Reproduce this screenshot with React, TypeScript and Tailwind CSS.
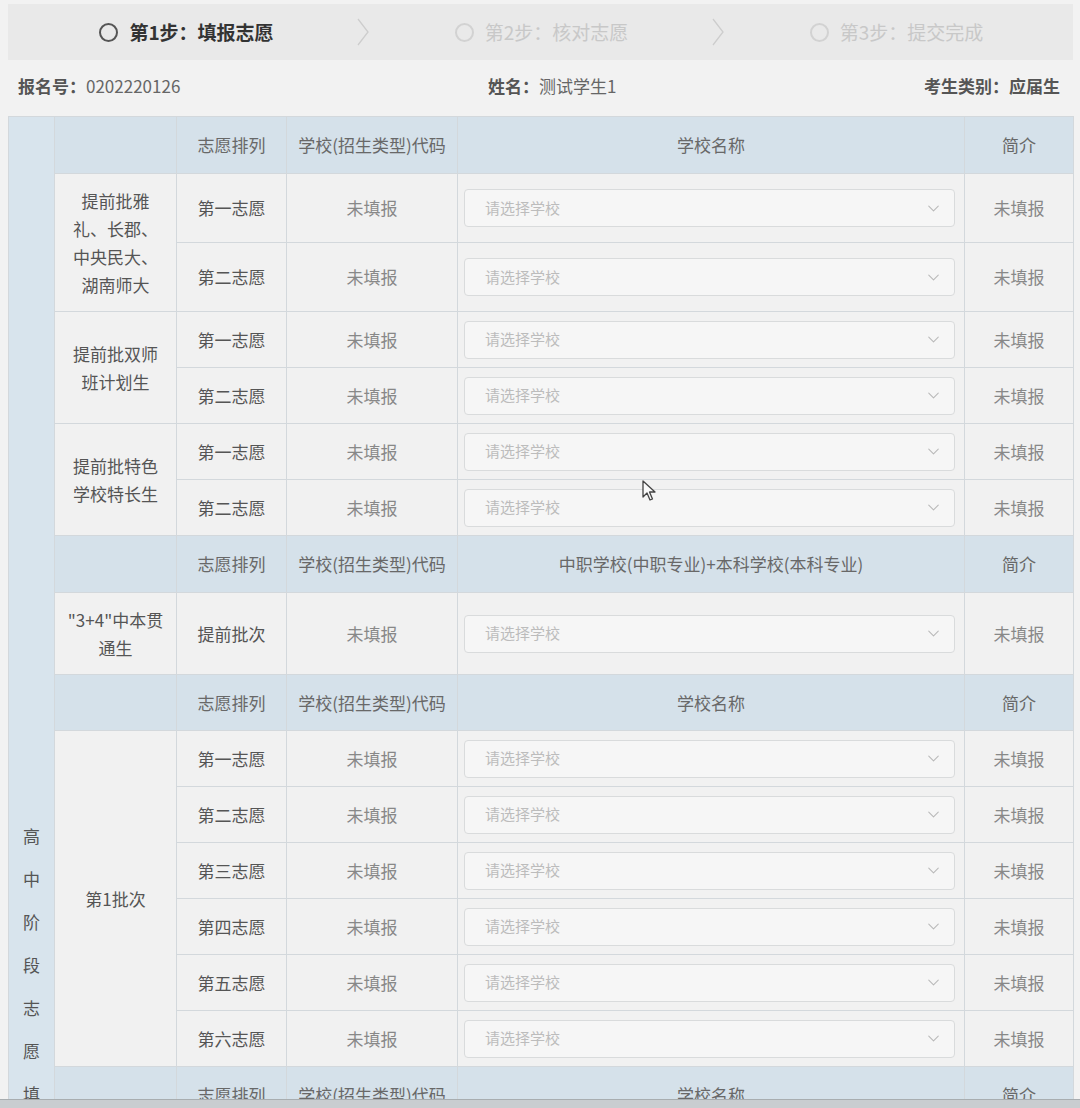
import { ChevronDown } from "lucide-react";

type Section = {
  category: string;
  wishes: string[];
  rowHeight: string;
};

const cell = "border border-[#d3d8dc] p-0 text-center align-middle";
const headCell = `${cell} bg-[#d5e1ea] text-[#686868]`;
const bodyCell = `${cell} bg-[#f1f1f1]`;

function StepChevron() {
  return (
    <div className="relative w-0">
      <svg
        width="14"
        height="30"
        viewBox="0 0 14 30"
        className="absolute left-[-7px] top-[-15px]"
      >
        <path d="M2 2 L12 15 L2 28" fill="none" stroke="#cdcdcd" strokeWidth="1.3" />
      </svg>
    </div>
  );
}

function Step({ label, active }: { label: string; active?: boolean }) {
  return (
    <div className="flex flex-1 items-center justify-center gap-[11px] pl-[2px]">
      <span
        className={
          active
            ? "size-[19px] rounded-full border-2 border-[#555]"
            : "size-[19px] rounded-full border-2 border-[#d2d2d2]"
        }
      />
      <span
        className={
          active
            ? "text-[19px] font-bold text-[#333]"
            : "text-[19px] text-[#c8c8c8]"
        }
      >
        {label}
      </span>
    </div>
  );
}

function SelectBox() {
  return (
    <div className="ml-[6px] mr-[9px] flex h-[38px] items-center justify-between rounded-[4px] border border-[#d9dbdc] bg-[#f6f6f6] pl-[20px] pr-[11px]">
      <span className="text-[15px] text-[#bcbcbc]">请选择学校</span>
      <ChevronDown size={19} strokeWidth={1.3} color="#b8b8b8" />
    </div>
  );
}

function HeaderRow({ title, height }: { title: string; height: string }) {
  return (
    <tr className={height}>
      <td className={headCell} />
      <td className={headCell}>志愿排列</td>
      <td className={headCell}>学校(招生类型)代码</td>
      <td className={headCell}>{title}</td>
      <td className={headCell}>简介</td>
    </tr>
  );
}

function SectionRows({ section }: { section: Section }) {
  return (
    <>
      {section.wishes.map((rank, i) => (
        <tr key={rank} className={section.rowHeight}>
          {i === 0 && (
            <td className={bodyCell} rowSpan={section.wishes.length}>
              <div className="mx-auto w-[96px] leading-[28px] text-[#555]">
                {section.category}
              </div>
            </td>
          )}
          <td className={`${bodyCell} text-[#555]`}>{rank}</td>
          <td className={`${bodyCell} text-[#888]`}>未填报</td>
          <td className={`${bodyCell} text-left`}>
            <SelectBox />
          </td>
          <td className={`${bodyCell} text-[#888]`}>未填报</td>
        </tr>
      ))}
    </>
  );
}

const early: Section[] = [
  {
    category: "提前批雅礼、长郡、中央民大、湖南师大",
    wishes: ["第一志愿", "第二志愿"],
    rowHeight: "h-[69px]",
  },
  {
    category: "提前批双师班计划生",
    wishes: ["第一志愿", "第二志愿"],
    rowHeight: "h-[56px]",
  },
  {
    category: "提前批特色学校特长生",
    wishes: ["第一志愿", "第二志愿"],
    rowHeight: "h-[56px]",
  },
];

const sixWishes = ["第一志愿", "第二志愿", "第三志愿", "第四志愿", "第五志愿", "第六志愿"];

const firstBatch: Section = {
  category: "第1批次",
  wishes: sixWishes,
  rowHeight: "h-[56px]",
};

const secondBatch: Section = {
  category: "第2批次",
  wishes: sixWishes,
  rowHeight: "h-[56px]",
};

const sideTitle = "高中阶段志愿填报";

export default function App() {
  const totalRows = 1 + 6 + 1 + 1 + 1 + 6 + 1 + 6;

  return (
    <div className="flex h-[1108px] flex-col overflow-hidden bg-[#f2f2f2] font-['Noto_Sans_CJK_SC','Noto_Sans',sans-serif] text-[17px]">
      <div className="relative flex-1 overflow-hidden pl-[8px] pr-[7px] pt-[4px]">
        {/* Steps */}
        <div className="flex h-[56px] items-center bg-[#e9e9e9]">
          <Step label="第1步：填报志愿" active />
          <StepChevron />
          <Step label="第2步：核对志愿" />
          <StepChevron />
          <Step label="第3步：提交完成" />
        </div>

        {/* Student info */}
        <div className="flex h-[56px] items-center justify-between pb-[4px] pl-[10px] pr-[13px] text-[#666]">
          <div>
            <span className="font-bold text-[#555]">报名号：</span>
            0202220126
          </div>
          <div>
            <span className="font-bold text-[#555]">姓名：</span>
            测试学生1
          </div>
          <div className="font-bold text-[#555]">考生类别：应届生</div>
        </div>

        {/* Wish table */}
        <table className="w-full table-fixed border-collapse">
          <colgroup>
            <col className="w-[46px]" />
            <col className="w-[122px]" />
            <col className="w-[110px]" />
            <col className="w-[171px]" />
            <col className="w-[507px]" />
            <col className="w-[109px]" />
          </colgroup>
          <tbody>
            <tr className="h-[57px]">
              <td
                rowSpan={totalRows}
                className="border border-[#d3d8dc] bg-[#d8e4ed] p-0 pt-[697px] align-top"
              >
                <div className="flex flex-col items-center text-[#555]">
                  {sideTitle.split("").map((ch, i) => (
                    <span key={i} className="leading-[43px]">
                      {ch}
                    </span>
                  ))}
                </div>
              </td>
              <td className={headCell} />
              <td className={headCell}>志愿排列</td>
              <td className={headCell}>学校(招生类型)代码</td>
              <td className={headCell}>学校名称</td>
              <td className={headCell}>简介</td>
            </tr>
            {early.map((s) => (
              <SectionRows key={s.category} section={s} />
            ))}

            <HeaderRow title="中职学校(中职专业)+本科学校(本科专业)" height="h-[57px]" />
            <SectionRows
              section={{
                category: "\"3+4\"中本贯通生",
                wishes: ["提前批次"],
                rowHeight: "h-[82px]",
              }}
            />

            <HeaderRow title="学校名称" height="h-[56px]" />
            <SectionRows section={firstBatch} />

            <HeaderRow title="学校名称" height="h-[57px]" />
            <SectionRows section={secondBatch} />
          </tbody>
        </table>

        {/* Mouse pointer */}
        <svg
          width="14"
          height="22"
          viewBox="0 0 14 22"
          className="absolute left-[642px] top-[480px]"
        >
          <path
            d="M1 1 L1 17 L5 13 L8 20 L10.5 19 L7.5 12 L13 12 Z"
            fill="#fafafa"
            stroke="#444"
            strokeWidth="1.3"
            strokeLinejoin="round"
          />
        </svg>
      </div>
      <div className="h-[9px] border-t border-[#a8adb0] bg-[#c9cdd0]" />
    </div>
  );
}
